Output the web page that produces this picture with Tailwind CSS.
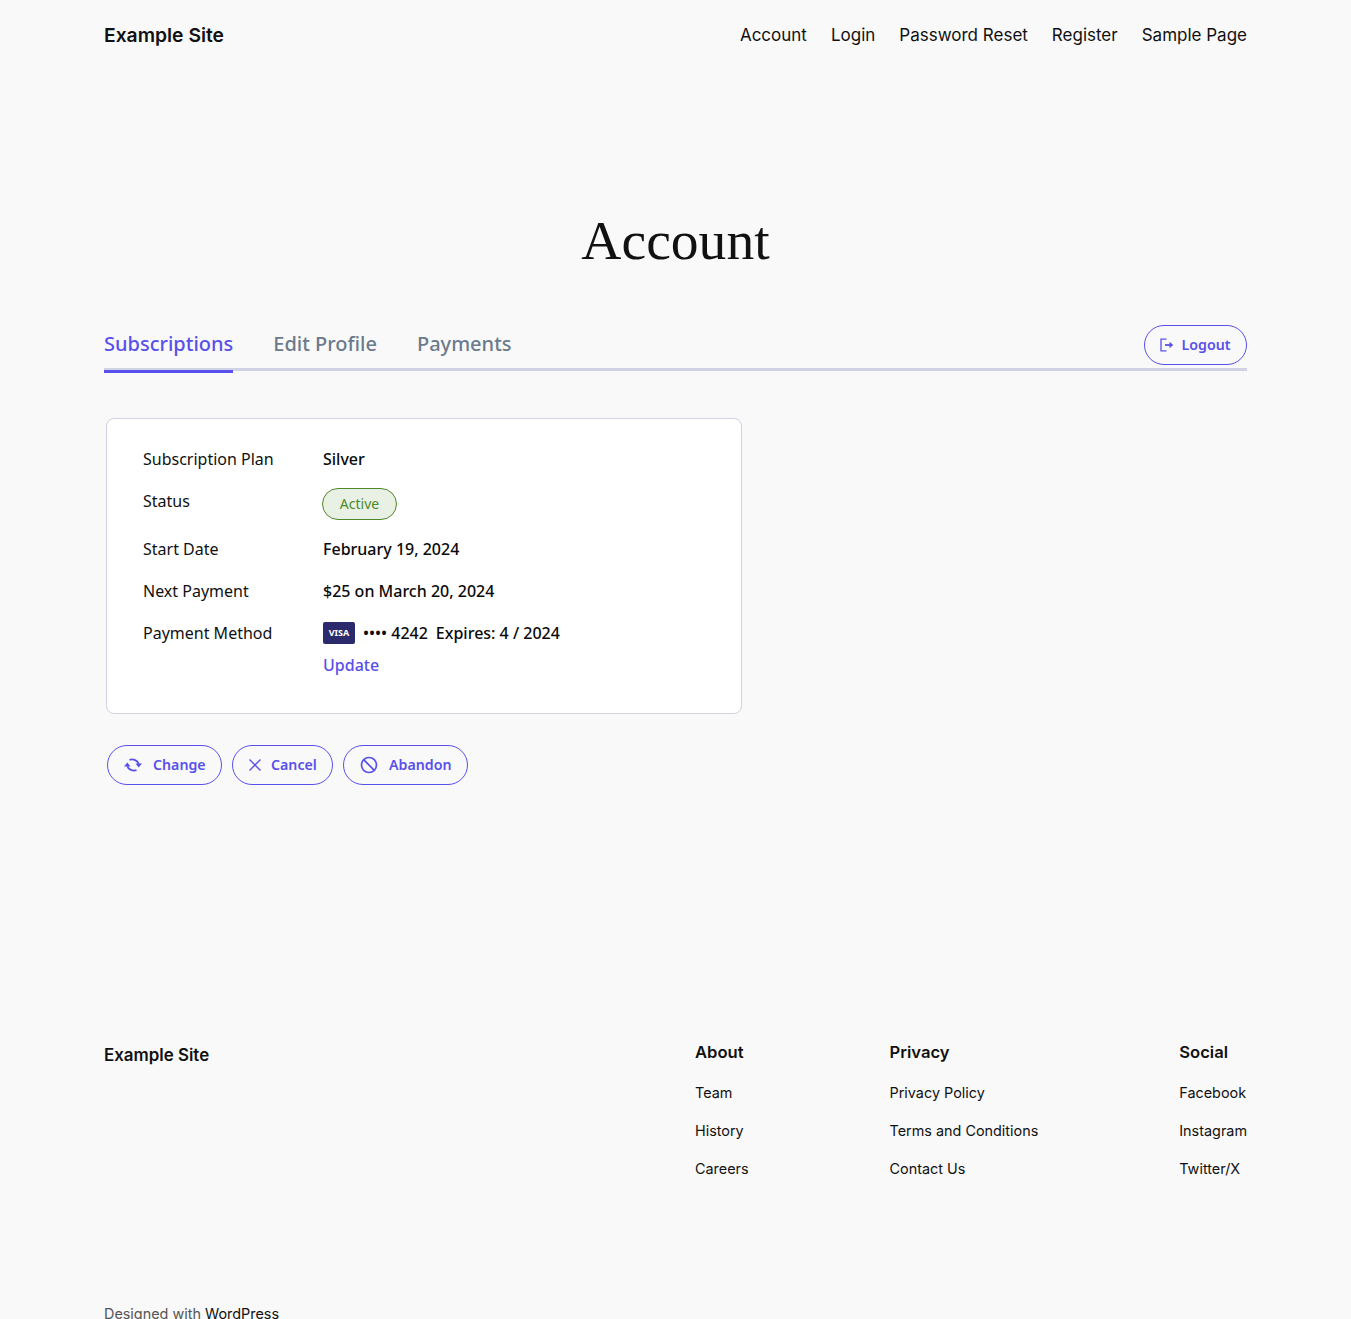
<!DOCTYPE html>
<html lang="en">
<head>
    <meta charset="UTF-8">
    <meta name="viewport" content="width=device-width, initial-scale=1.0">
    <title>Account</title>
    <script src="https://cdn.jsdelivr.net/npm/@tailwindcss/browser@4"></script>
</head>
<body class="bg-[#f9f9f9] text-[#111111] font-['Inter',sans-serif] h-[1319px] overflow-hidden">
    <div class="px-[104px]">
        <!-- Header -->
        <header class="flex items-center justify-between h-[70px]">
            <a href="#" class="text-[19.3px] font-semibold">Example Site</a>
            <nav class="flex gap-6 text-[17px] pt-[2px]">
                <a href="#">Account</a>
                <a href="#">Login</a>
                <a href="#">Password Reset</a>
                <a href="#">Register</a>
                <a href="#">Sample Page</a>
            </nav>
        </header>

        <!-- Page title -->
        <h1 class="mt-[131px] text-center text-[55.6px] leading-[78px] font-['Liberation_Serif',serif]">Account</h1>

        <!-- Tabs -->
        <div class="mt-[37px] flex justify-between border-b-[3px] border-[#cfd3e3] h-[55px] font-['Noto_Sans',sans-serif]">
            <div class="flex gap-[40px] text-[20px] font-medium text-[#6b7a8d] pt-[13px]">
                <a href="#" class="h-[44px] border-b-[3px] border-[#5850ec] text-[#5850ec] leading-[30px]">Subscriptions</a>
                <a href="#" class="leading-[30px]">Edit Profile</a>
                <a href="#" class="leading-[30px]">Payments</a>
            </div>
            <a href="#" class="mt-[9px] h-10 w-[103px] shrink-0 flex items-center gap-[7.5px] pl-[15px] rounded-full border border-[#5850ec] text-[#5850ec] text-[14.2px] font-semibold">
                <svg class="w-[14px] h-[14px] shrink-0" viewBox="0 0 14 14" fill="none" stroke="currentColor" stroke-width="1.300">
                    <path d="M6.500 1.200H1v11.600h5.500"/>
                    <path d="M5 7h5" stroke-width="1.800"/>
                    <path d="M9.500 3.800 13.200 7 9.500 10.200z" fill="currentColor" stroke="none"/>
                </svg>
                <span>Logout</span>
            </a>
        </div>

        <main class="pl-[2px] font-['Noto_Sans',sans-serif]">
            <!-- Subscription card -->
            <section class="mt-[47px] w-[636px] h-[296px] bg-white border border-[#cfd3e3] rounded-lg px-9 pt-[25px] text-[16px]">
                <div class="flex h-[30px] items-center">
                    <div class="w-[180px]">Subscription Plan</div>
                    <div class="font-medium text-[#0a0a0a]">Silver</div>
                </div>
                <div class="flex mt-[12px] h-[36px]">
                    <div class="w-[180px] leading-[30px]">Status</div>
                    <span class="h-8 w-[75px] -ml-px flex items-center justify-center rounded-full border border-[#4d8a2c] bg-[#e8f1e3] text-[#4d8a2c] text-sm mt-[2px]">Active</span>
                </div>
                <div class="flex mt-[12px] h-[30px] items-center">
                    <div class="w-[180px]">Start Date</div>
                    <div class="font-medium text-[#0a0a0a]">February 19, 2024</div>
                </div>
                <div class="flex mt-[12px] h-[30px] items-center">
                    <div class="w-[180px]">Next Payment</div>
                    <div class="font-medium text-[#0a0a0a]">$25 on March 20, 2024</div>
                </div>
                <div class="flex mt-[12px] h-[30px] items-center">
                    <div class="w-[180px]">Payment Method</div>
                    <div class="flex items-center font-medium text-[#0a0a0a]">
                        <span class="w-8 h-[22px] mr-2 flex items-center justify-center rounded-[2px] bg-[#2a2a6c] text-white text-[9px] font-bold">VISA</span>
                        <span>•••• 4242</span>
                        <span class="ml-2">Expires: 4 / 2024</span>
                    </div>
                </div>
                <a href="#" class="block ml-[180px] mt-[2px] font-medium text-[#5850ec] leading-[30px]">Update</a>
            </section>

            <!-- Actions -->
            <div class="mt-[31px] flex gap-[10px] pl-px text-[14.2px] font-semibold text-[#5850ec]">
                <a href="#" class="h-10 flex items-center gap-[10px] pl-[15px] w-[115px] rounded-full border border-[#5850ec]">
                    <svg class="w-[20px] h-[20px] shrink-0" viewBox="0 0 20 20" fill="none" stroke="currentColor" stroke-width="1.900">
                        <path d="M6.500 4.800a7 6 0 0 1 9.200 4"/>
                        <path d="M13.500 15.200a7 6 0 0 1-9.200-4"/>
                        <path d="M12.500 8.500h6.500l-3.300 4zM1 11.500h6.500l-3.200-4z" fill="currentColor" stroke="none"/>
                    </svg>
                    Change
                </a>
                <a href="#" class="h-10 flex items-center gap-[8px] pl-[14px] w-[101px] rounded-full border border-[#5850ec]">
                    <svg class="w-[16px] h-[16px] shrink-0" viewBox="0 0 16 16" fill="none" stroke="currentColor" stroke-width="1.400">
                        <path d="M2.500 2.500l11 11M13.500 2.500l-11 11"/>
                    </svg>
                    Cancel
                </a>
                <a href="#" class="h-10 flex items-center gap-[10px] pl-[15px] w-[125px] rounded-full border border-[#5850ec]">
                    <svg class="w-[20px] h-[20px] shrink-0" viewBox="0 0 20 20" fill="none" stroke="currentColor" stroke-width="1.700">
                        <circle cx="10" cy="10" r="7.500"/>
                        <path d="M4.700 4.700l10.600 10.600"/>
                    </svg>
                    Abandon
                </a>
            </div>
        </main>

        <!-- Footer -->
        <footer class="mt-[255px]">
            <div class="flex justify-between">
                <a href="#" class="text-[16.9px] font-semibold leading-[24px] pt-[3px]">Example Site</a>
                <div class="flex w-[552px] justify-between text-[14.4px]">
                    <div>
                        <h2 class="text-[16.6px] font-semibold leading-[24px]">About</h2>
                        <ul class="mt-[18px] space-y-[16px] leading-[22px]">
                            <li><a href="#">Team</a></li>
                            <li><a href="#">History</a></li>
                            <li><a href="#">Careers</a></li>
                        </ul>
                    </div>
                    <div>
                        <h2 class="text-[16.6px] font-semibold leading-[24px]">Privacy</h2>
                        <ul class="mt-[18px] space-y-[16px] leading-[22px]">
                            <li><a href="#">Privacy Policy</a></li>
                            <li><a href="#">Terms and Conditions</a></li>
                            <li><a href="#">Contact Us</a></li>
                        </ul>
                    </div>
                    <div>
                        <h2 class="text-[16.6px] font-semibold leading-[24px]">Social</h2>
                        <ul class="mt-[18px] space-y-[16px] leading-[22px]">
                            <li><a href="#">Facebook</a></li>
                            <li><a href="#">Instagram</a></li>
                            <li><a href="#">Twitter/X</a></li>
                        </ul>
                    </div>
                </div>
            </div>
            <p class="mt-[123px] text-[14.4px] leading-[22px] text-[#555555]">Designed with <a href="#" class="text-[#111111]">WordPress</a></p>
        </footer>
    </div>
</body>
</html>
